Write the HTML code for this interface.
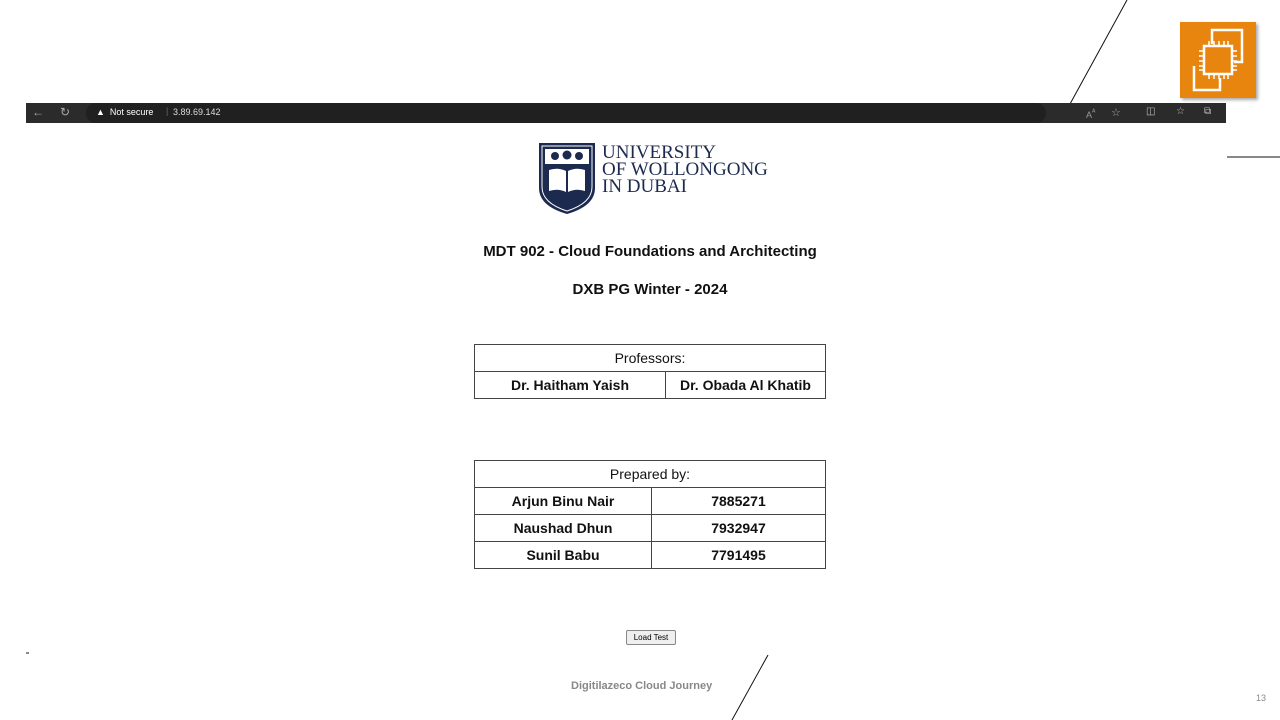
<!DOCTYPE html>
<html><head><style>
body{margin:0;width:1280px;height:720px;background:#fff;position:relative;overflow:hidden;font-family:"Liberation Sans",sans-serif}
.abs{position:absolute}
.bar{left:26px;top:103px;width:1200px;height:20px;background:#2b2b2b;color:#ddd;font-size:9px}
table{position:absolute;border-collapse:collapse;font-size:14px;color:#111}
td{border:1px solid #444;text-align:center;height:26px;padding:0}
.b{font-weight:bold}
.t{left:0;width:1300px;text-align:center;font-weight:bold;font-size:15px;color:#111}
</style></head><body>
<svg class="abs" style="left:0;top:0" width="1280" height="720">
<line x1="1127" y1="0" x2="1070" y2="104" stroke="#111" stroke-width="1"/>
<line x1="768" y1="655" x2="732" y2="720" stroke="#111" stroke-width="1"/>
<line x1="1227" y1="157" x2="1280" y2="157" stroke="#111" stroke-width="1"/>
<line x1="26" y1="653" x2="29" y2="653" stroke="#111"/>
</svg>
<div class="abs" style="left:1180px;top:22px;width:76px;height:76px;background:#e8850f;box-shadow:2px 2px 3px #aaa">
<svg width="76" height="76" viewBox="0 0 76 76" fill="none" stroke="#fff" stroke-width="2.5">
<path d="M14 44 V68 H40 V56"/><path d="M32 22 V8 H62 V40 H54"/>
<rect x="24" y="24" width="28" height="28"/>
<path d="M29 19v5M34 19v5M39 19v5M44 19v5M48 19v5M29 52v5M34 52v5M39 52v5M44 52v5M48 52v5M19 29h5M19 34h5M19 39h5M19 44h5M19 48h5M52 29h5M52 34h5M52 39h5M52 44h5M52 48h5" stroke-width="1.5"/>
</svg></div>
<div class="abs bar">
<span class="abs" style="left:6px;top:2px;font-size:12px;color:#aaa">←</span>
<span class="abs" style="left:34px;top:2px;font-size:12px;color:#aaa">↻</span>
<span class="abs" style="left:60px;top:0;width:960px;height:20px;background:#202020;border-radius:10px"></span>
<span class="abs" style="left:70px;top:4px;color:#fff">▲&nbsp; Not secure</span>
<span class="abs" style="left:140px;top:3px;color:#666">|</span>
<span class="abs" style="left:147px;top:4px;color:#ddd">3.89.69.142</span>
<span class="abs" style="left:1060px;top:4px;color:#999">A<sup>ᴬ</sup></span>
<span class="abs" style="left:1085px;top:3px;color:#aaa;font-size:11px">☆</span>
<span class="abs" style="left:1120px;top:3px;color:#bbb;font-size:10px">◫</span>
<span class="abs" style="left:1150px;top:3px;color:#bbb;font-size:10px">☆</span>
<span class="abs" style="left:1178px;top:3px;color:#bbb;font-size:10px">⧉</span>
</div>
<svg class="abs" style="left:537px;top:140px" width="60" height="76" viewBox="0 0 60 76">
<path d="M2 3 H58 V48 Q58 66 30 74 Q2 66 2 48Z" fill="#1c2a4f"/>
<path d="M5 6 H55 V47 Q55 63 30 71 Q5 63 5 47Z" fill="none" stroke="#fff" stroke-width="1"/>
<path d="M8 9 H52 V24 H8Z" fill="#fff"/>
<circle cx="18" cy="16" r="4" fill="#1c2a4f"/><circle cx="30" cy="15" r="4.5" fill="#1c2a4f"/><circle cx="42" cy="16" r="4" fill="#1c2a4f"/>
<path d="M12 30 Q21 27 29 31 V52 Q21 48 12 51Z M31 31 Q39 27 48 30 V51 Q39 48 31 52Z" fill="#fff"/>
</svg>
<div class="abs" style="left:602px;top:144px;font-family:'Liberation Serif',serif;font-size:19px;line-height:17px;color:#1c2a4f">UNIVERSITY<br>OF WOLLONGONG<br>IN DUBAI</div>
<div class="abs t" style="top:243px">MDT 902 - Cloud Foundations and Architecting</div>
<div class="abs t" style="top:281px">DXB PG Winter - 2024</div>
<table style="left:474px;top:344px;width:352px">
<tr><td colspan="2">Professors:</td></tr>
<tr><td class="b" style="width:190px">Dr. Haitham Yaish</td><td class="b">Dr. Obada Al Khatib</td></tr>
</table>
<table style="left:474px;top:460px;width:352px">
<tr><td colspan="2">Prepared by:</td></tr>
<tr><td class="b" style="width:176px">Arjun Binu Nair</td><td class="b">7885271</td></tr>
<tr><td class="b">Naushad Dhun</td><td class="b">7932947</td></tr>
<tr><td class="b">Sunil Babu</td><td class="b">7791495</td></tr>
</table>
<div class="abs" style="left:626px;top:630px;width:48px;height:13px;border:1px solid #888;border-radius:2px;background:#efefef;font-size:8px;text-align:center;line-height:13px">Load Test</div>
<div class="abs" style="left:571px;top:680px;font-size:11px;font-weight:bold;color:#888">Digitilazeco Cloud Journey</div>
<div class="abs" style="left:1256px;top:693px;font-size:9px;color:#888">13</div>
</body></html>
